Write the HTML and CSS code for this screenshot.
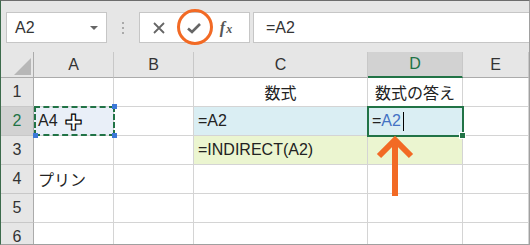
FILE: index.html
```html
<!DOCTYPE html>
<html lang="ja">
<head>
    <meta charset="UTF-8">
    <title>INDIRECT</title>
    <link rel="stylesheet" href="styles.css">
</head>
<body>
    <div class="window">
        <div class="toolbar">
            <div class="name-box">
                <span>A2</span>
                <span class="drop"></span>
            </div>
            <div class="dots"><i></i><i></i><i></i></div>
            <div class="buttons">
                <span class="btn">
                    <svg width="14" height="14" viewBox="0 0 14 14"><path d="M2 2L12 12M12 2L2 12" stroke="#666" stroke-width="1.8" fill="none"/></svg>
                </span>
                <span class="btn check">
                    <svg width="16" height="14" viewBox="0 0 16 14"><path d="M2 7.5L6 11L14 3" stroke="#666" stroke-width="2.6" fill="none"/></svg>
                </span>
                <span class="btn fx"><span>f<small>x</small></span></span>
            </div>
            <div class="formula">=A2</div>
            <div class="ring"></div>
        </div>

        <div class="sheet">
            <div class="corner"><span class="tri"></span></div>
            <div class="col">A</div>
            <div class="col">B</div>
            <div class="col">C</div>
            <div class="col active">D</div>
            <div class="col">E</div>

            <div class="row">1</div>
            <div class="cell"></div>
            <div class="cell"></div>
            <div class="cell center">数式</div>
            <div class="cell center">数式の答え</div>
            <div class="cell"></div>

            <div class="row active">2</div>
            <div class="cell copy">A4 <span class="cross">✚</span></div>
            <div class="cell"></div>
            <div class="cell blue">=A2</div>
            <div class="cell blue edit">=<span class="ref">A2</span><span class="caret"></span></div>
            <div class="cell"></div>

            <div class="row">3</div>
            <div class="cell"></div>
            <div class="cell"></div>
            <div class="cell green">=INDIRECT(A2)</div>
            <div class="cell green"></div>
            <div class="cell"></div>

            <div class="row">4</div>
            <div class="cell">プリン</div>
            <div class="cell"></div>
            <div class="cell"></div>
            <div class="cell"></div>
            <div class="cell"></div>

            <div class="row">5</div>
            <div class="cell"></div>
            <div class="cell"></div>
            <div class="cell"></div>
            <div class="cell"></div>
            <div class="cell"></div>

            <div class="row">6</div>
            <div class="cell"></div>
            <div class="cell"></div>
            <div class="cell"></div>
            <div class="cell"></div>
            <div class="cell"></div>

            <div class="marquee"><b class="h1"></b><b class="h2"></b><b class="h3"></b></div>
            <div class="cursor-box"><b></b></div>
            <svg class="arrow" width="40" height="62" viewBox="0 0 40 62">
                <path d="M20 60V6M4 20L20 4L36 20" stroke="#f26a25" stroke-width="6" fill="none"/>
            </svg>
        </div>
    </div>
</body>
</html>
```

FILE: styles.css
```css
body {
    margin: 0;
    font-family: "Liberation Sans", "Noto Sans CJK JP", sans-serif;
    background: #fff;
}

.window {
    width: 530px;
    height: 245px;
    box-sizing: border-box;
    border-top: 1px solid #6d6d6d;
    border-left: 1px solid #3d6b4c;
    border-right: 1px solid #a0a0a0;
    border-bottom: 1px solid #a0a0a0;
    overflow: hidden;
    position: relative;
}

/* 수식 입력줄 */
.toolbar {
    height: 51px;
    background: #e6e6e6;
    display: flex;
    align-items: flex-start;
    padding-top: 11px;
    box-sizing: border-box;
    position: relative;
}

.name-box {
    margin-left: 5px;
    width: 101px;
    height: 31px;
    box-sizing: border-box;
    background: #fff;
    border: 1px solid #c6c6c6;
    display: flex;
    align-items: center;
    justify-content: space-between;
    padding: 0 8px 0 8px;
    font-size: 16px;
    color: #333;
}

.drop {
    width: 0;
    height: 0;
    border-left: 4px solid transparent;
    border-right: 4px solid transparent;
    border-top: 4px solid #666;
}

.dots {
    width: 32px;
    height: 31px;
    display: flex;
    flex-direction: column;
    align-items: center;
    justify-content: center;
    gap: 3px;
}

.dots i {
    width: 2px;
    height: 2px;
    background: #aaa;
}

.buttons {
    width: 111px;
    height: 31px;
    box-sizing: border-box;
    background: #fff;
    border: 1px solid #c6c6c6;
    display: flex;
    align-items: center;
    justify-content: space-between;
    padding: 0 4px 0 4px;
}

.btn {
    width: 30px;
    display: flex;
    align-items: center;
    justify-content: center;
}

.btn.check {
    margin-left: 3px;
}

.btn.fx {
    margin-right: 4px;
    font-family: "Liberation Serif", serif;
    font-style: italic;
    font-weight: bold;
    color: #555;
    font-size: 16px;
    line-height: 1;
}

.fx small {
    font-size: 12px;
    margin-left: 1px;
}

.formula {
    margin-left: 3px;
    flex: 1;
    height: 31px;
    box-sizing: border-box;
    background: #fff;
    border: 1px solid #c6c6c6;
    border-right: none;
    padding-left: 12px;
    line-height: 29px;
    font-size: 16px;
    color: #333;
}

.ring {
    position: absolute;
    left: 176px;
    top: 8px;
    width: 30px;
    height: 30px;
    border: 3px solid #f26a25;
    border-radius: 50%;
}

/* 시트 */
.sheet {
    display: grid;
    grid-template-columns: 33px 80px 80px 174px 95px 66px;
    grid-template-rows: 26px repeat(6, 29px);
    position: relative;
    font-size: 16px;
    color: #222;
}

.corner,
.col,
.row {
    background: #e6e6e6;
    border-right: 1px solid #ababab;
    border-bottom: 1px solid #ababab;
    box-sizing: border-box;
    display: flex;
    align-items: center;
    justify-content: center;
    color: #333;
}

.col {
    border-right-color: #c8c8c8;
}

.row {
    border-bottom-color: #c8c8c8;
}

.col.active,
.row.active {
    background: #d2d2d2;
    color: #217346;
}

.col.active {
    border-bottom: 2px solid #217346;
}

.corner {
    position: relative;
}

.tri {
    position: absolute;
    right: 2px;
    bottom: 2px;
    width: 0;
    height: 0;
    border-left: 17px solid transparent;
    border-bottom: 17px solid #b7b7b7;
}

.cell {
    border-right: 1px solid #d4d4d4;
    border-bottom: 1px solid #d4d4d4;
    box-sizing: border-box;
    display: flex;
    align-items: center;
    padding-left: 4px;
    white-space: nowrap;
}

.cell.center {
    justify-content: center;
    padding-left: 0;
}

.cell.blue {
    background: #daeef3;
}

.cell.green {
    background: #ebf5d0;
}

.cell.copy {
    background: #e9eff8;
}

.cross {
    color: #fff;
    -webkit-text-stroke: 1.2px #000;
    font-size: 18px;
    margin-left: 7px;
}

.ref {
    color: #4472c4;
}

.caret {
    width: 1px;
    height: 19px;
    background: #000;
    margin-left: 2px;
}

.marquee {
    position: absolute;
    left: 33px;
    top: 54px;
    width: 81px;
    height: 30px;
    box-sizing: border-box;
    border: 2px dashed #217346;
}

.marquee b {
    position: absolute;
    width: 5px;
    height: 5px;
    background: #3c78d8;
}

.marquee .h1 { right: -4px; top: -4px; }
.marquee .h2 { right: -4px; bottom: -4px; }
.marquee .h3 { left: -3px; bottom: -4px; }

.cursor-box {
    position: absolute;
    left: 366px;
    top: 54px;
    width: 97px;
    height: 31px;
    box-sizing: border-box;
    border: 2px solid #217346;
}

.cursor-box b {
    position: absolute;
    right: -4px;
    bottom: -4px;
    width: 5px;
    height: 5px;
    background: #217346;
    border: 1px solid #fff;
}

.arrow {
    position: absolute;
    left: 374px;
    top: 84px;
}
```
